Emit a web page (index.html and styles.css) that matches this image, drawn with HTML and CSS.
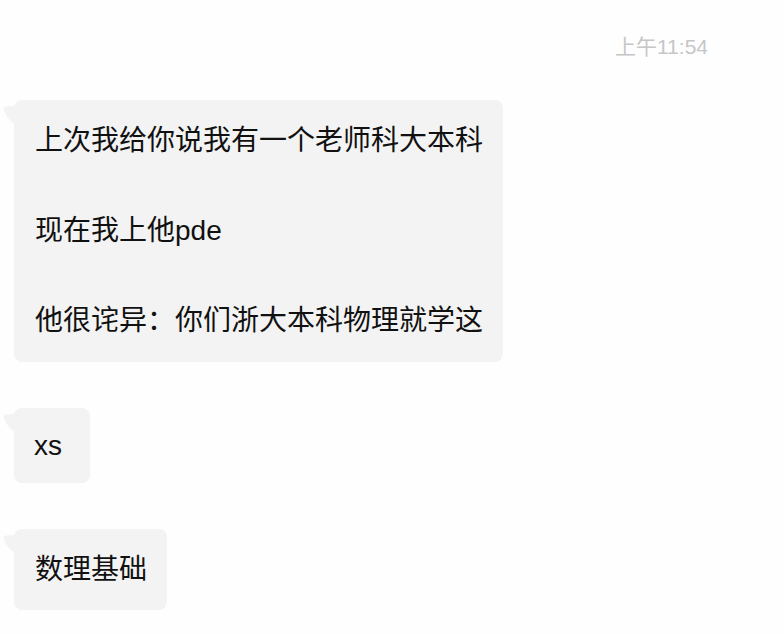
FILE: index.html
```html
<!DOCTYPE html>
<html lang="zh-CN">
<head>
    <meta charset="UTF-8">
    <meta name="viewport" content="width=device-width, initial-scale=1.0">
    <title>聊天记录</title>
    <link rel="stylesheet" href="styles.css">
</head>
<body>
    <div class="chat">
        <div class="time">上午11:54</div>

        <div class="msg">
            <div class="bubble long">
                <svg class="tail" viewBox="0 0 13 20" width="13" height="20"><path d="M13 0 L3 0.5 Q0 1 0.5 3 Q4 14 13 19 Z"/></svg>
                <p>上次我给你说我有一个老师科大本科</p>
                <p class="blank"></p>
                <p>现在我上他pde</p>
                <p class="blank"></p>
                <p>他很诧异：你们浙大本科物理就学这</p>
            </div>
        </div>

        <div class="msg">
            <div class="bubble short">
                <svg class="tail" viewBox="0 0 13 20" width="13" height="20"><path d="M13 0 L3 0.5 Q0 1 0.5 3 Q4 14 13 19 Z"/></svg>
                <p>xs</p>
            </div>
        </div>

        <div class="msg">
            <div class="bubble">
                <svg class="tail" viewBox="0 0 13 20" width="13" height="20"><path d="M13 0 L3 0.5 Q0 1 0.5 3 Q4 14 13 19 Z"/></svg>
                <p>数理基础</p>
            </div>
        </div>
    </div>
</body>
</html>
```

FILE: styles.css
```css
body {
    margin: 0;
    background-color: #fefefe;
    font-family: "Liberation Sans", "Noto Sans CJK SC", sans-serif;
    color: #111;
}
.chat {
    display: flex;
    flex-direction: column;
    padding: 34px 0 0 14px;
}
.time {
    align-self: flex-end;
    margin-right: 76px;
    font-size: 21px;
    line-height: 26px;
    color: #c6c6c6;
}
.msg {
    display: flex;
    margin-top: 46px;
}
.msg:nth-child(2) {
    margin-top: 40px;
}
.bubble {
    position: relative;
    background-color: #f3f3f3;
    border-radius: 8px;
    padding: 18px 20px 18px 21px;
    font-size: 28px;
    line-height: 45px;
}
.bubble p {
    margin: 0;
    white-space: nowrap;
}
.bubble .blank {
    height: 45px;
}
.bubble.long {
    padding-bottom: 19px;
}
.bubble.short {
    padding: 15px 28px 15px 20px;
}
.tail {
    position: absolute;
    left: -11px;
    top: 6px;
    fill: #f3f3f3;
}
```
